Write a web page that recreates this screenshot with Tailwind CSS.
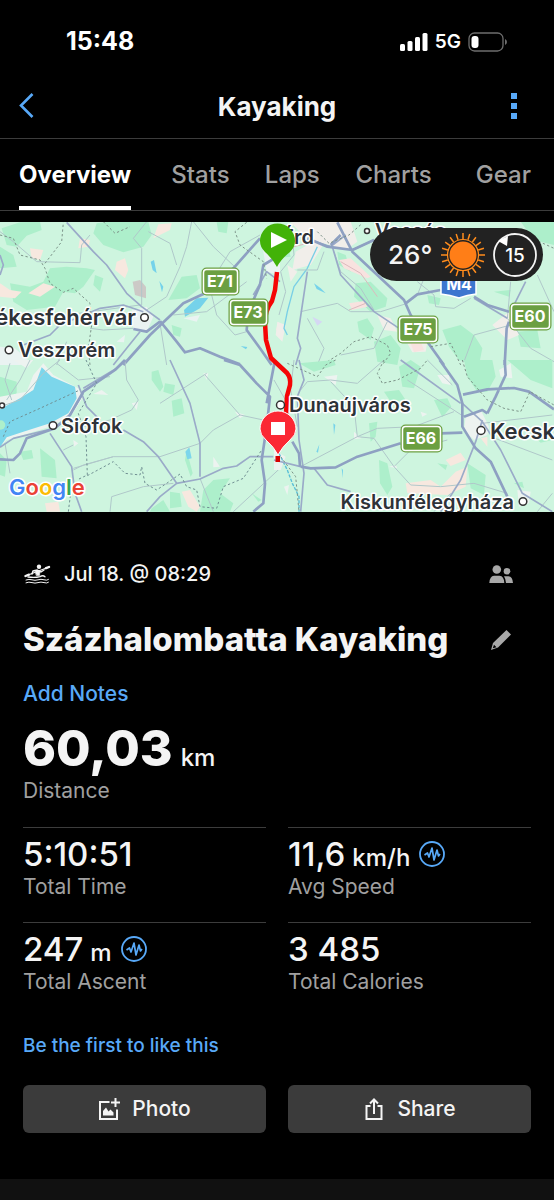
<!DOCTYPE html>
<html lang="en">
<head>
  <meta charset="UTF-8">
  <meta name="viewport" content="width=device-width, initial-scale=1">
  <title>Kayaking</title>
  <script src="https://cdn.jsdelivr.net/npm/@tailwindcss/browser@4"></script>
</head>
<body class="bg-black text-[#f4f4f4] min-h-screen flex flex-col font-['Inter',sans-serif]">

  <!-- Status bar -->
  <div class="h-[74px] pt-[10px] pl-[66px] pr-[46px] flex items-center justify-between">
    <span class="text-[25px] font-bold text-white">15:48</span>
    <div class="flex items-center gap-[7px]">
      <svg class="w-7 h-5" viewBox="0 0 28 20" fill="#fff">
        <rect x="0" y="12" width="5" height="7" rx="1.5"/>
        <rect x="7.500" y="9" width="5" height="10" rx="1.5"/>
        <rect x="15" y="5" width="5" height="14" rx="1.5"/>
        <rect x="22.500" y="1" width="5" height="18" rx="1.500"/>
      </svg>
      <span class="text-[19px] font-semibold text-white">5G</span>
      <svg class="w-10 h-5" viewBox="0 0 40 20">
        <rect x="1" y="1" width="34" height="18" rx="5.500" fill="none" stroke="#6e6e6e" stroke-width="1.300"/>
        <rect x="3.500" y="4" width="7" height="12" rx="3" fill="#fff"/>
        <path d="M37 7 Q39 8 39 10 Q39 12 37 13 Z" fill="#6e6e6e"/>
      </svg>
    </div>
  </div>

  <header class="h-[65px] border-b border-[#3c3c3c] px-[19px] grid grid-cols-[1fr_auto_1fr] items-center">
    <button aria-label="Back" class="justify-self-start">
      <svg class="w-4 h-7" viewBox="0 0 16 28" fill="none" stroke="#58a9f8" stroke-width="2.600"><path d="M13.500 2 L2 13.500 L13.500 25"/></svg>
    </button>
    <h1 class="text-[26px] font-bold">Kayaking</h1>
    <button aria-label="More" class="justify-self-end pr-[17px]">
      <svg class="w-2 h-7" viewBox="0 0 8 28" fill="#58a9f8"><path d="M1 1h6v6h-6zM1 11h6v6h-6zM1 21h6v6h-6z"/></svg>
    </button>
  </header>

  <nav class="h-[72px] border-b border-[#3c3c3c] pl-[19px] pr-[23px] grid grid-cols-[153fr_94fr_91fr_121fr_53fr] text-2xl font-medium text-[#a0a0a0]">
    <a href="#overview" class="justify-self-start flex items-center border-b-4 pt-1 border-white font-bold text-white">Overview</a>
    <a href="#stats" class="flex items-center">Stats</a>
    <a href="#laps" class="flex items-center">Laps</a>
    <a href="#charts" class="flex items-center">Charts</a>
    <a href="#gear" class="flex items-center">Gear</a>
  </nav>

  <!-- Map -->
  <section class="relative mt-[11px] h-[290px] overflow-hidden">
    <svg class="w-full h-full font-['Inter',sans-serif]" viewBox="0 0 554 290" preserveAspectRatio="xMidYMid slice">
      <rect width="554" height="290" fill="#cef5df"/>

      <!-- north west -->
      <g transform="translate(0 -7) scale(.33333)" fill="none" stroke-linejoin="round">
        <path fill="#adefcb" d="M5 40L60 22L120 20L125 45L80 62L50 95L20 90ZM290 25L340 18L445 20L455 60L430 95L370 112L310 90L280 55ZM0 95L40 120L50 155L0 160ZM150 160L200 155L260 160L285 165L250 215L225 235L190 230L165 275L80 285L40 260L30 205L90 215L130 200ZM545 185L590 180L600 220L560 250L505 255ZM650 22L685 20L680 55L655 50ZM285 180L310 190L300 230L280 210ZM515 330L545 340L540 365L520 360Z"/>
        <path fill="#f7e8df" d="M475 28L515 25L510 45L460 70ZM350 140L375 130L385 165L375 190L345 165ZM240 70L270 75L265 95L235 100ZM90 100L130 105L120 135L95 130ZM85 235L130 205L165 215L120 245ZM0 205L30 225L65 230L45 250L0 245ZM835 320L840 350L828 345Z"/>
        <path fill="#ccc9c6" d="M398 200L420 195L438 215L438 250L405 240Z"/>
        <path fill="#eaf3f2" d="M395 285L440 275L460 305L440 350L400 345ZM0 395L45 400L90 440L60 450L0 450ZM550 310L600 300L590 320ZM350 380L375 360L372 382ZM785 80L840 110L840 180L800 170Z"/>
        <path fill="#75d2ea" d="M552 285L590 250L625 248L600 280L555 305ZM452 140L462 135L470 175L458 165ZM478 198L490 215L486 232ZM722 393L742 396L738 403Z"/>
        <path stroke="#b0c8ca" stroke-width="3" d="M575 20L560 95L540 155L500 245L440 285M0 50L40 80L110 140L240 143L245 90L270 60M400 70L425 100L425 270M400 70L440 20M445 50L510 85L530 150M270 340L310 345L400 340M580 20L640 95L720 170M640 190L690 110L780 60M740 350L705 360L650 300L635 240M170 335L200 300L420 270M480 325L500 450M200 380L170 450M520 300L620 290L740 200"/>
        <path stroke="#9aaac8" stroke-width="5" d="M200 22L280 110L320 150L380 235L425 275L480 315M0 120L10 150L0 180M420 350L380 400L340 450M300 280L370 270L430 290M70 390L150 360L180 330L300 280M840 200L800 170L760 240"/>
        <path stroke="#8ea0c2" stroke-width="8" d="M370 450L450 360L550 265L615 235L700 160L780 70M480 318L530 380L555 412L600 400L660 425L720 448M840 120L790 150L780 210L745 290L740 345L780 400L815 450M400 342L440 350L480 320"/>
        <path stroke="#7b9288" stroke-width="3" stroke-dasharray="7 7" d="M0 60L40 70L60 120L120 135L135 160L150 205L190 232L220 220L270 265L275 330L265 400L270 450M135 145L185 80L190 22M310 20L345 55L390 35M740 22L705 50L720 90L790 140L800 190"/>
      </g>

      <!-- north east -->
      <g transform="translate(274 -7) scale(.33333)" fill="none" stroke-linejoin="round">
        <path fill="#adefcb" d="M245 205L290 200L340 250L335 275L290 290L240 245ZM250 320L280 310L300 340L290 375L255 350ZM300 380L350 360L380 400L370 450L310 440ZM505 345L560 330L600 360L625 400L615 450L555 435L525 395ZM740 20L840 20L840 90L780 75ZM190 110L215 120L230 170L195 150ZM0 95L40 90L50 125L0 130ZM460 240L500 250L495 270L465 265ZM730 350L790 345L800 400L740 395ZM660 230L710 225L705 245Z"/>
        <path fill="#f1eeea" d="M50 22L230 20L250 80L215 105L150 85L110 150L55 165L65 110L110 85ZM10 320L35 330L25 380L5 360ZM310 300L350 310L370 350L330 345ZM655 330L705 290L735 360L700 375ZM40 150L70 170L50 200ZM400 385L460 380L455 410L415 412Z"/>
        <path fill="#f8e2df" d="M195 135L230 130L290 185L280 190L210 160ZM225 265L270 258L280 275L235 285ZM410 385L440 380L450 405L420 412Z"/>
        <path fill="#75d2ea" d="M120 205L140 220L155 235L128 222Z"/>
        <path fill="#d5d8f3" d="M115 305L145 320L130 332Z"/>
        <path stroke="#79cfe6" stroke-width="4" d="M130 95L100 160L60 215L40 290L30 340L40 360"/>
        <path stroke="#b0c8ca" stroke-width="3" d="M55 60L60 120L20 170L35 230L15 300M70 165L130 165L150 110M80 290L190 265L230 290L320 290L400 265M100 310L150 400L130 450M430 200L480 240L485 275L540 280L590 250M710 200L700 310L770 400L840 440M710 330L600 360L570 440M340 320L300 400L200 420M790 180L840 290M450 190L430 240M180 110L200 170L260 220L300 285"/>
        <path stroke="#9aaac8" stroke-width="5" d="M100 170L70 370L80 400L65 450M175 95L200 180L300 290L390 350M600 250L700 310M235 105L300 75M110 75L170 95L215 60M755 200L710 290"/>
        <path stroke="#8ea0c2" stroke-width="8" d="M190 22L235 110L390 255L410 300L460 380L510 450M100 70L160 95L235 105L300 75M395 265L430 238L500 225M600 245L640 270L705 290M705 320L698 340L692 450M170 90L200 60"/>
        <path stroke="#dcb9bd" stroke-width="3" d="M0 130L60 95L100 85M200 140L260 175L310 245M225 285L275 265"/>
        <path stroke="#7b9288" stroke-width="3" stroke-dasharray="7 7" d="M130 50L165 85L225 60L265 25M730 50L840 100M160 440L200 415L240 380L290 365L340 390L350 415L325 450M470 395L530 385L560 450"/>
      </g>

      <!-- south west -->
      <g transform="translate(0 138) scale(.33333)" fill="none" stroke-linejoin="round">
        <path fill="#adefcb" d="M0 50L50 65L50 100L20 120L0 115ZM455 35L475 30L490 80L480 95L455 60ZM495 70L525 75L520 105L490 95ZM515 122L545 115L553 160L520 170ZM120 265L165 300L170 355L125 350ZM560 270L578 340L572 350L555 300ZM640 360L690 355L660 400L700 430L690 455L600 455L610 390ZM510 395L540 400L545 440L510 445ZM455 445L490 420L510 455L450 455ZM755 400L785 420L775 425ZM60 275L95 270L100 295L70 300ZM0 280L20 300L15 350L0 345Z"/>
        <path fill="#edf3f0" d="M100 45L130 10L160 45L235 85L250 110L215 165L150 200L20 240L0 260L0 110L80 95ZM40 0L100 0L80 25ZM395 130L415 125L410 150ZM305 90L325 105L280 102ZM705 155L735 165L720 175ZM220 240L235 250L222 260ZM640 290L660 320L640 322ZM610 40L625 40L620 60Z"/>
        <path fill="#f7e8df" d="M545 395L570 390L600 440L590 455L565 440ZM135 430L175 425L180 455L140 455Z"/>
        <path fill="#7cd6eb" d="M125 22L155 50L225 80L230 115L205 160L150 190L70 215L20 232L0 262L0 148L60 115L100 90ZM556 275L568 262L575 295L562 298Z"/>
        <circle cx="2" cy="195" r="14" fill="#adefcb"/>
        <path stroke="#b0c8ca" stroke-width="3" d="M30 10L15 60L35 120M90 0L60 60L20 120M375 0L380 60L415 120L395 150L330 180L250 200M0 140L60 120L130 40L180 0M620 40L480 130M615 45L720 165L790 180M720 165L640 210L600 250L480 290L340 290L220 325M220 330L250 315L340 290M330 455L335 410L430 380L520 370M600 355L640 455M220 255L190 270M840 325L700 455M15 250L30 340M170 10L235 60L330 50"/>
        <path stroke="#9aaac8" stroke-width="5" d="M510 0L570 130L600 250L600 350M235 75L260 140L300 180M150 220L215 320L225 400L245 455M370 210L430 245L475 290L530 370L600 357L670 325L710 318L750 290L820 290M530 370L480 410L440 455M0 262L40 235L150 208L200 180L250 100M250 85L350 25L380 0"/>
        <path stroke="#8ea0c2" stroke-width="8" d="M375 0L345 30L250 95L210 165L165 205L80 235L60 280L40 300L0 298M672 0L720 15L770 70L810 110L800 200L785 300L795 370L790 430L760 455M825 0L800 130"/>
        <path stroke="#6f8f92" stroke-width="3" stroke-dasharray="7 7" d="M10 230L30 185L120 145L235 92M258 0L290 70L235 160L258 230L262 345L235 358M262 347L340 305L375 340L420 345L425 320L435 370L470 390L500 370L540 342L560 380L590 390L600 440L650 445L670 380L730 355L785 270M205 455L212 400"/>
      </g>

      <!-- south east -->
      <g transform="translate(274 138) scale(.33333)" fill="none" stroke-linejoin="round">
        <path fill="#adefcb" d="M75 10L180 0L185 15L120 35ZM375 20L410 0L440 20L420 85L385 80ZM330 95L375 90L395 120L350 125ZM570 0L655 0L665 50L640 95L610 95L580 50ZM700 0L835 0L835 85L770 60ZM480 120L520 115L532 140L505 172ZM285 190L310 185L305 230L290 245ZM315 300L340 310L355 380L340 405L318 370ZM580 310L635 345L630 405L590 385ZM780 230L835 225L835 240L800 248ZM490 310L520 315L515 330ZM720 370L745 365L750 385Z"/>
        <path fill="#f7e8df" d="M395 370L470 360L500 380L545 335L580 320L575 380L520 405L400 400ZM515 300L560 278L575 300L530 318ZM620 235L640 230L640 260Z"/>
        <path fill="#edf3f0" d="M575 170L620 150L645 200L640 225L600 240L570 210ZM490 45L525 45L530 75L505 70ZM675 30L710 10L715 55L680 50ZM150 50L190 45L185 75ZM440 155L460 162L445 170ZM345 320L365 315L370 325ZM730 390L770 395L765 430L735 440ZM240 215L262 235L240 238ZM0 270L35 290L20 330L0 330ZM30 380L45 375L40 405Z"/>
        <path fill="#75d2ea" d="M178 190L184 195L180 225ZM136 253L132 278L127 275ZM203 325L207 330L206 355Z"/>
        <path stroke="#58bfd8" stroke-width="4" stroke-dasharray="10 4" d="M15 280L40 330L55 370L75 410L75 455"/>
        <path stroke="#b0c8ca" stroke-width="3" d="M80 90L100 65L170 60L250 70L330 0M170 65L240 140L250 230L80 320M250 230L310 205L420 200L540 155M250 230L300 235L360 320L410 375L500 380L600 370L700 400M400 60L570 170M360 320L410 270L520 240M625 190L835 165M650 230L835 300M530 400L480 455M60 0L50 90L70 200M0 60L40 130L20 190M790 455L835 400M535 75L460 0"/>
        <path stroke="#9aaac8" stroke-width="5" d="M120 325L160 375L230 395M625 180L605 245L560 360L500 455M565 130L625 185L680 270L745 400L835 455M80 320L0 300M75 0L90 60L70 110L75 240L90 340L80 455M380 0L560 130"/>
        <path stroke="#8ea0c2" stroke-width="8" d="M497 0L550 75L565 130L565 200L605 265L650 305L700 410M80 320L110 325L185 322L250 290L380 250M500 220L565 218M692 0L695 45L665 110L640 160M567 104L640 88L720 84L765 95L840 148M55 245L75 280L78 320M570 170L625 150L640 160"/>
        <path stroke="#7b9288" stroke-width="3" stroke-dasharray="7 7" d="M40 10L130 50L155 15L185 0M330 0L310 40L325 70L370 60L440 25L460 0M565 0L580 50L640 120L690 145L740 155L768 95L840 135M20 290L65 350L75 455"/>
      </g>

      <!-- track -->
      <path d="M277 50L275 68L272 79Q265 88 265 101L266 118L271 136L287 151Q291 156 290 163L287 174L286 192" fill="none" stroke="#f50505" stroke-width="4.500" stroke-linejoin="round"/>
      <rect x="275.500" y="234" width="4.500" height="6" fill="#d80000"/>

      <!-- towns -->
      <g fill="#fff" stroke="#333" stroke-width="1.500">
        <circle cx="144.500" cy="95.500" r="3.800"/>
        <circle cx="9" cy="128" r="3.800"/>
        <circle cx="53" cy="203.500" r="3.800"/>
        <circle cx="2" cy="183.500" r="2.500"/>
        <circle cx="280.500" cy="183" r="4"/>
        <circle cx="481" cy="208.500" r="4"/>
        <circle cx="523" cy="279.500" r="3.800"/>
        <circle cx="367" cy="9" r="2.500"/>
      </g>
      <g fill="#2e3238" stroke="#fff" stroke-width="3" stroke-linejoin="round" paint-order="stroke" font-weight="600" font-size="20">
        <text x="136" y="103" text-anchor="end" font-size="22">Székesfehérvár</text>
        <text x="18" y="135">Veszprém</text>
        <text x="61" y="211">Siófok</text>
        <text x="289" y="190">Dunaújváros</text>
        <text x="490" y="217" font-size="22">Kecskemét</text>
        <text x="514" y="287" text-anchor="end">Kiskunfélegyháza</text>
        <text x="314" y="22" text-anchor="end">Érd</text>
        <text x="375" y="16">Vecsés</text>
      </g>

      <!-- road signs -->
      <path d="M441 58H476V72Q467 73 459 76Q450 73 441 72Z" fill="#3d76cf" stroke="#fff" stroke-width="1.500"/>
      <g fill="#6b9f41" stroke="#fff" stroke-width="1.500">
        <g stroke="#6b9f41" stroke-width="4">
          <rect x="203.500" y="47.500" width="34" height="24" rx="3"/>
          <rect x="230.500" y="78.500" width="36" height="24" rx="3"/>
          <rect x="399.500" y="95.500" width="37" height="24" rx="3"/>
          <rect x="511.500" y="82.500" width="38" height="24" rx="3"/>
          <rect x="402.500" y="204.500" width="38" height="24" rx="3"/>
        </g>
        <rect x="203.500" y="47.500" width="34" height="24" rx="3"/>
        <rect x="230.500" y="78.500" width="36" height="24" rx="3"/>
        <rect x="399.500" y="95.500" width="37" height="24" rx="3"/>
        <rect x="511.500" y="82.500" width="38" height="24" rx="3"/>
        <rect x="402.500" y="204.500" width="38" height="24" rx="3"/>
      </g>
      <g fill="#fff" font-size="16" font-weight="700" text-anchor="middle">
        <text x="220" y="65">E71</text>
        <text x="248" y="96">E73</text>
        <text x="418" y="113">E75</text>
        <text x="530" y="100">E60</text>
        <text x="421" y="222">E66</text>
        <text x="459" y="68">M4</text>
      </g>

      <!-- start and finish pins -->
      <path d="M277 45Q273 37 265 30Q260 25 260 19A17.500 17.500 0 0 1 295 19Q295 25 290 30Q281 37 277 45Z" fill="#42b208"/>
      <path d="M271 10V26L287 18Z" fill="#fff"/>
      <path d="M278 233Q274 225 266 218Q260 213 260 207A17.500 17.500 0 0 1 296 207Q296 213 290 218Q282 225 278 233Z" fill="#fb2834" stroke="#fff" stroke-width="1"/>
      <rect x="271" y="200" width="14" height="13" fill="#fff"/>

      <text x="9" y="273" font-size="22" font-weight="600" stroke="#fff" stroke-width="3" stroke-linejoin="round" paint-order="stroke"><tspan fill="#4285f4">G</tspan><tspan fill="#ea4335">o</tspan><tspan fill="#fbbc05">o</tspan><tspan fill="#4285f4">g</tspan><tspan fill="#34a853">l</tspan><tspan fill="#ea4335">e</tspan></text>
    </svg>

    <!-- Weather -->
    <div class="absolute top-[6px] right-[11px] h-[53px] rounded-full bg-[#222] pl-[18px] pr-1 flex items-center">
      <span class="w-[47px] text-[26px] font-medium">26°</span>
      <svg class="w-14 h-12" viewBox="-28 -24 56 48">
        <circle r="13.500" fill="#ff7e17"/>
        <circle r="15.500" fill="none" stroke="#ff8c1c" stroke-width="1.200"/>
        <g stroke="#ff8c1c" stroke-width="1.500">
          <path id="rays" d="M0 -16V-22M0 16V22M-16 0H-22M16 0H22"/>
          <use href="#rays" transform="rotate(18)"/>
          <use href="#rays" transform="rotate(36)"/>
          <use href="#rays" transform="rotate(54)"/>
          <use href="#rays" transform="rotate(72)"/>
        </g>
      </svg>
      <svg class="w-12 h-12 font-['Inter',sans-serif]" viewBox="-24 -24 48 48">
        <circle r="21" fill="none" stroke="#f4f4f4" stroke-width="1.800"/>
        <path d="M-17 -14L-7 -19L-8 -9Z" fill="#fff"/>
        <text y="7" font-size="19" font-weight="500" text-anchor="middle" fill="#fff">15</text>
      </svg>
    </div>
  </section>

  <main class="px-[23px] pt-[46px]">
    <div class="h-8 pr-[18px] flex items-center justify-between">
      <div class="flex items-center gap-[13px]">
        <svg class="w-7 h-5" viewBox="0 0 28 20" fill="none" stroke="#f4f4f4" stroke-linecap="round">
          <circle cx="16" cy="2.800" r="2.200" fill="#f4f4f4" stroke="none"/>
          <path d="M2.500 12L26 3" stroke-width="1.200"/>
          <path d="M2.500 12L6 10.700M23 4.200L26 3" stroke-width="2.400"/>
          <path d="M10 7L14 6L18 8L21 6M10 7L9 10" stroke-width="1.500"/>
          <path d="M12 6.500L17 7.500L16.500 11.500H13.500Z" fill="#f4f4f4" stroke-width=".6"/>
          <path d="M5 13Q12 14 17 12.600Q20 10.800 22 12.800" stroke-width="1.300"/>
          <path d="M3 16Q6 14.800 9 15.800T15 15.800T21 15.800T25.500 15.500M3 18.800Q6 17.600 9 18.600T15 18.600T21 18.600T25.500 18.300" stroke-width="1"/>
        </svg>
        <span class="text-xl font-medium">Jul 18. @ 08:29</span>
      </div>
      <button aria-label="Participants">
        <svg class="w-6 h-5" viewBox="0 0 24 20" fill="#a8a8a8">
          <circle cx="7.800" cy="5.500" r="4.300"/>
          <circle cx="18" cy="7.200" r="3.300"/>
          <path d="M.300 19Q.800 12 5 11.800H10.500Q15 12 15.300 19ZM15 12.200H19.500Q23.500 12.500 24 19H17Q16.800 15 15 12.200Z"/>
        </svg>
      </button>
    </div>

    <div class="mt-[30px] h-10 pr-5 flex items-center justify-between">
      <h2 class="text-[33px] font-extrabold whitespace-nowrap">Százhalombatta Kayaking</h2>
      <button aria-label="Edit title">
        <svg class="w-5 h-5" viewBox="0 0 20 20" fill="#a8a8a8">
          <path fill-rule="evenodd" d="M15.500 0L20 4.500L7 17.500L0 20L2 13ZM3 14.800L1.800 18.300L5.500 17.200Z"/>
        </svg>
      </button>
    </div>

    <div class="mt-5 h-7 flex items-center">
      <a href="#notes" class="text-[21px] font-medium text-[#58a9f8]">Add Notes</a>
    </div>

    <p class="mt-4 h-12 flex items-baseline gap-2">
      <span class="text-[50px]/12 font-extrabold">60,03</span>
      <span class="text-2xl/6 font-medium">km</span>
    </p>
    <p class="mt-[7px] text-[21px]/6 text-[#a0a0a0]">Distance</p>

    <dl class="mt-6 grid grid-cols-2 gap-x-[22px] font-medium">
      <div class="flex flex-col-reverse border-t border-[#3c3c3c] pt-[10px] pb-[23px]">
        <dt class="mt-[5px] text-[21px]/6 font-normal text-[#a0a0a0]">Total Time</dt>
        <dd class="h-8 text-[33px]/8">5:10:51</dd>
      </div>
      <div class="flex flex-col-reverse border-t border-[#3c3c3c] pt-[10px] pb-[23px]">
        <dt class="mt-[5px] text-[21px]/6 font-normal text-[#a0a0a0]">Avg Speed</dt>
        <dd class="h-8 flex items-center gap-[9px]">
          <span class="flex items-baseline gap-[7px]"><span class="text-[33px]/8">11,6</span><span class="text-2xl/6">km/h</span></span>
          <svg class="w-[26px] h-[26px]" viewBox="0 0 26 26" fill="none" stroke="#58a9f8" stroke-width="1.800" stroke-linejoin="round"><circle cx="13" cy="13" r="12"/><path d="M5.500 14L8.500 12L10 16L13 7L15 19L18 9L19.500 15L21 13" stroke-width="1.700"/></svg>
        </dd>
      </div>
      <div class="flex flex-col-reverse border-t border-[#3c3c3c] pt-[10px] pb-[23px]">
        <dt class="mt-[5px] text-[21px]/6 font-normal text-[#a0a0a0]">Total Ascent</dt>
        <dd class="h-8 flex items-center gap-[9px]">
          <span class="flex items-baseline gap-[7px]"><span class="text-[33px]/8">247</span><span class="text-2xl/6">m</span></span>
          <svg class="w-[26px] h-[26px]" viewBox="0 0 26 26" fill="none" stroke="#58a9f8" stroke-width="1.800" stroke-linejoin="round"><circle cx="13" cy="13" r="12"/><path d="M5.500 14L8.500 12L10 16L13 7L15 19L18 9L19.500 15L21 13" stroke-width="1.700"/></svg>
        </dd>
      </div>
      <div class="flex flex-col-reverse border-t border-[#3c3c3c] pt-[10px] pb-[23px]">
        <dt class="mt-[5px] text-[21px]/6 font-normal text-[#a0a0a0]">Total Calories</dt>
        <dd class="h-8 text-[33px]/8">3 485</dd>
      </div>
    </dl>

    <div class="mt-[17px] h-6 flex items-center">
      <a href="#like" class="text-[19px] font-medium text-[#58a9f8]">Be the first to like this</a>
    </div>

    <div class="mt-[27px] grid grid-cols-2 gap-[22px] text-[21px] font-medium">
      <button class="h-12 rounded-md bg-[#3b3b3b] flex items-center justify-center gap-3">
        <svg class="w-[22px] h-[22px]" viewBox="0 0 22 22" fill="none" stroke="#f4f4f4" stroke-width="2">
          <path d="M11.500 4H2V21H19V11.500M17.500 0V9M13 4.500H22"/>
          <path d="M5 17.500V13L8 9.500L10.500 13.500L12.500 11.500L15.500 14.500V17.500Z" fill="#f4f4f4" stroke="none"/>
        </svg>
        Photo
      </button>
      <button class="h-12 rounded-md bg-[#3b3b3b] flex items-center justify-center gap-3">
        <svg class="w-[22px] h-[22px]" viewBox="0 0 22 22" fill="none" stroke="#f4f4f4" stroke-width="2">
          <path d="M7.500 8H3.500V21H18.500V8H14.500M11 16V2M7 5.500L11 1.500L15 5.500"/>
        </svg>
        Share
      </button>
    </div>
  </main>

  <div class="mt-[46px] min-h-5 flex-1 bg-[#111]"></div>
</body>
</html>
